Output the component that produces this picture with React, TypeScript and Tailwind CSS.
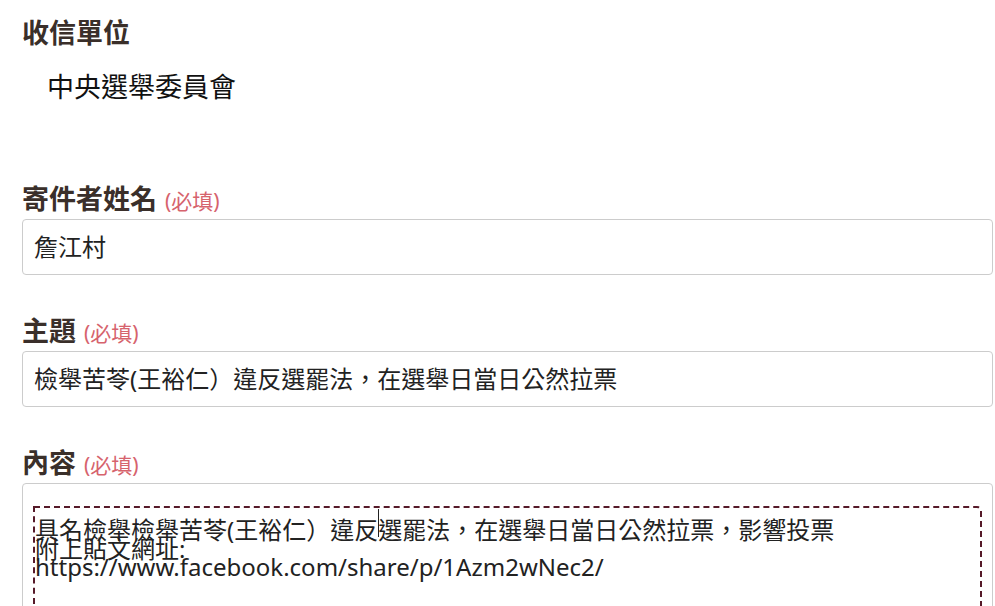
import type { JSX } from 'react'

const FONT = "font-['Noto_Sans','Noto_Sans_CJK_TC',sans-serif]"

function Label({ text, required }: { text: string; required?: boolean }): JSX.Element {
  return (
    <div className="flex items-baseline gap-[8px]">
      <span className="text-[27px] font-bold leading-[30px] text-[#3a2f2a]">{text}</span>
      {required && <span className="text-[21px] leading-[30px] text-[#d6636d]">(必填)</span>}
    </div>
  )
}

function TextInput({ value }: { value: string }): JSX.Element {
  return (
    <div className="mt-[3px] flex h-[56px] items-center rounded-[4px] border border-[#cccccc] bg-white px-[11px] text-[24px] text-[#222222]">
      {value}
    </div>
  )
}

export default function App(): JSX.Element {
  return (
    <div className={`${FONT} h-[606px] w-[995px] overflow-hidden bg-white pl-[22px] pr-[2px]`}>
      <div className="pt-[18px]">
        <Label text="收信單位" />
        <p className="mt-[22px] pl-[25px] text-[27px] leading-[34px] text-[#111111]">中央選舉委員會</p>
      </div>

      <div className="mt-[80px]">
        <Label text="寄件者姓名" required />
        <TextInput value="詹江村" />
      </div>

      <div className="mt-[41px]">
        <Label text="主題" required />
        <TextInput value="檢舉苦苓(王裕仁）違反選罷法，在選舉日當日公然拉票" />
      </div>

      <div className="mt-[41px]">
        <Label text="內容" required />
        <div className="mt-[3px] h-[200px] rounded-[4px] border border-[#cccccc] bg-white px-[10px] pt-[22px]">
          <div className="h-[200px] rounded-tr-[5px] border-2 border-dashed border-[#561a29] pt-[13px] text-[24px] leading-[18.5px] text-[#222222]">
            <p>
              具名檢舉檢舉苦苓(王裕仁）違反
              <span className="relative">
                <span className="absolute -top-[4px] left-0 h-[28px] w-px bg-[#222222]" />
              </span>
              選罷法，在選舉日當日公然拉票，影響投票
            </p>
            <p>附上貼文網址:</p>
            <p>https://www.facebook.com/share/p/1Azm2wNec2/</p>
          </div>
        </div>
      </div>
    </div>
  )
}
